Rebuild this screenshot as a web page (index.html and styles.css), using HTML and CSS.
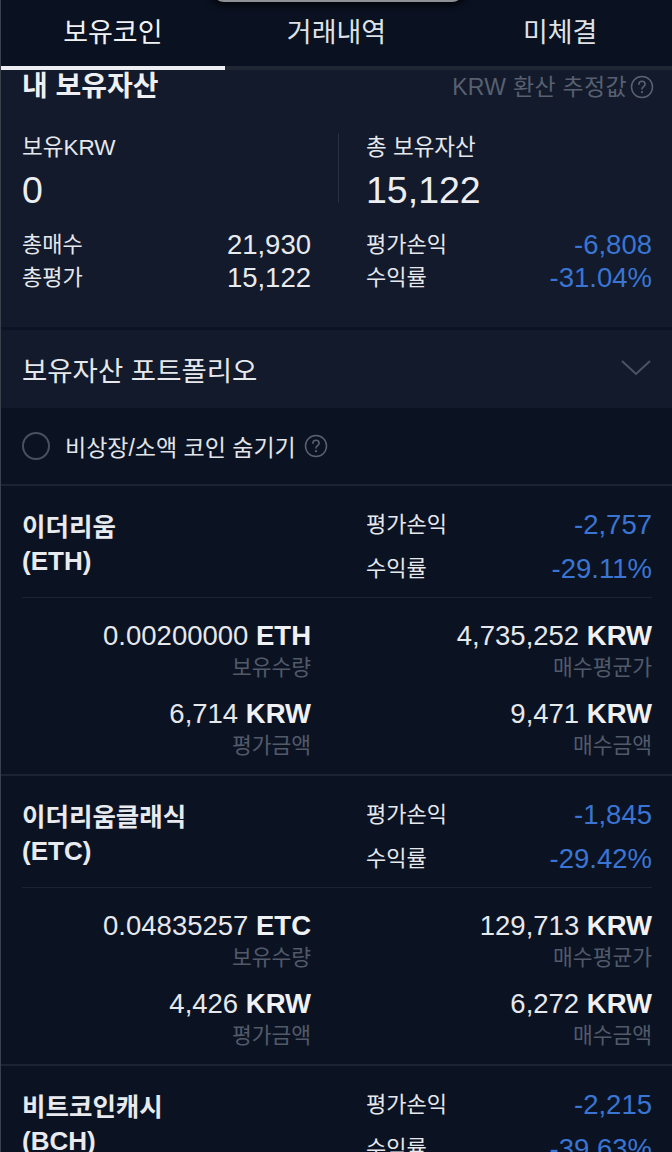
FILE: index.html
```html
<!DOCTYPE html>
<html lang="ko">
<head>
<meta charset="utf-8">
<title>보유코인</title>
<link rel="stylesheet" href="styles.css">
</head>
<body>
<div class="app">
  <div class="notch"></div>

  <nav class="tabs">
    <div class="tab active">보유코인</div>
    <div class="tab">거래내역</div>
    <div class="tab">미체결</div>
  </nav>

  <section class="summary">
    <div class="summary-head">
      <h2 class="summary-title">내 보유자산</h2>
      <div class="note">KRW 환산 추정값
        <svg class="help" viewBox="0 0 24 24" width="24" height="24"><circle cx="12" cy="12" r="10.5" fill="none" stroke="currentColor" stroke-width="1.5"/><path d="M8.9 9.3a3.1 3.1 0 0 1 6.2 0c0 2.2-3.1 2.3-3.1 4.7" fill="none" stroke="currentColor" stroke-width="1.6" stroke-linecap="round"/><circle cx="12" cy="17.2" r="1.1" fill="currentColor"/></svg>
      </div>
    </div>

    <div class="summary-top">
      <div class="total">
        <div class="total-label">보유KRW</div>
        <div class="total-value">0</div>
      </div>
      <div class="divider"></div>
      <div class="total">
        <div class="total-label">총 보유자산</div>
        <div class="total-value">15,122</div>
      </div>
    </div>

    <div class="summary-stats">
      <div class="stat-col">
        <div class="stat"><span class="label">총매수</span><span class="num">21,930</span></div>
        <div class="stat"><span class="label">총평가</span><span class="num">15,122</span></div>
      </div>
      <div class="stat-col">
        <div class="stat"><span class="label">평가손익</span><span class="num down">-6,808</span></div>
        <div class="stat"><span class="label">수익률</span><span class="num down">-31.04%</span></div>
      </div>
    </div>
  </section>

  <div class="portfolio-head">
    <span class="portfolio-title">보유자산 포트폴리오</span>
    <svg class="chevron" viewBox="0 0 30 16" width="30" height="16"><polyline points="1,1 15,14 29,1" fill="none" stroke="currentColor" stroke-width="2"/></svg>
  </div>

  <div class="filter-row">
    <span class="check"></span>
    <span class="filter-text">비상장/소액 코인 숨기기</span>
    <svg class="help" viewBox="0 0 24 24" width="24" height="24"><circle cx="12" cy="12" r="10.5" fill="none" stroke="currentColor" stroke-width="1.5"/><path d="M8.9 9.3a3.1 3.1 0 0 1 6.2 0c0 2.2-3.1 2.3-3.1 4.7" fill="none" stroke="currentColor" stroke-width="1.6" stroke-linecap="round"/><circle cx="12" cy="17.2" r="1.1" fill="currentColor"/></svg>
  </div>

  <ul class="coins">
    <li class="coin">
      <div class="coin-top">
        <div class="coin-name">
          <div class="name-ko">이더리움</div>
          <div class="name-sym">(ETH)</div>
        </div>
        <div class="coin-pnl">
          <div class="stat"><span class="label">평가손익</span><span class="num down">-2,757</span></div>
          <div class="stat"><span class="label">수익률</span><span class="num down">-29.11%</span></div>
        </div>
      </div>
      <div class="coin-detail">
        <div class="cell"><div class="val">0.00200000 <b>ETH</b></div><div class="sub">보유수량</div></div>
        <div class="cell"><div class="val">4,735,252 <b>KRW</b></div><div class="sub">매수평균가</div></div>
        <div class="cell"><div class="val">6,714 <b>KRW</b></div><div class="sub">평가금액</div></div>
        <div class="cell"><div class="val">9,471 <b>KRW</b></div><div class="sub">매수금액</div></div>
      </div>
    </li>

    <li class="coin">
      <div class="coin-top">
        <div class="coin-name">
          <div class="name-ko">이더리움클래식</div>
          <div class="name-sym">(ETC)</div>
        </div>
        <div class="coin-pnl">
          <div class="stat"><span class="label">평가손익</span><span class="num down">-1,845</span></div>
          <div class="stat"><span class="label">수익률</span><span class="num down">-29.42%</span></div>
        </div>
      </div>
      <div class="coin-detail">
        <div class="cell"><div class="val">0.04835257 <b>ETC</b></div><div class="sub">보유수량</div></div>
        <div class="cell"><div class="val">129,713 <b>KRW</b></div><div class="sub">매수평균가</div></div>
        <div class="cell"><div class="val">4,426 <b>KRW</b></div><div class="sub">평가금액</div></div>
        <div class="cell"><div class="val">6,272 <b>KRW</b></div><div class="sub">매수금액</div></div>
      </div>
    </li>

    <li class="coin">
      <div class="coin-top">
        <div class="coin-name">
          <div class="name-ko">비트코인캐시</div>
          <div class="name-sym">(BCH)</div>
        </div>
        <div class="coin-pnl">
          <div class="stat"><span class="label">평가손익</span><span class="num down">-2,215</span></div>
          <div class="stat"><span class="label">수익률</span><span class="num down">-39.63%</span></div>
        </div>
      </div>
    </li>
  </ul>
</div>
</body>
</html>
```

FILE: styles.css
```css
* { box-sizing: border-box; }

html, body {
  margin: 0;
  padding: 0;
  background: #0b1323;
}

body {
  width: 672px;
  height: 1152px;
  overflow: hidden;
  font-family: "Liberation Sans", "Noto Sans CJK KR", sans-serif;
  color: #e6e8ec;
}

.app {
  position: relative;
  min-height: 1152px;
  border-left: 1px solid #3a414c;
  background: #0b1323;
}

/* device frame edge peeking in at the top */
.notch {
  position: absolute;
  top: -20px;
  left: 211px;
  width: 252px;
  height: 22px;
  background: #05080f;
  border: 2px solid #8e9196;
  border-top: none;
  border-radius: 0 0 12px 12px;
  box-shadow: 0 0 6px 3px #03050a;
  z-index: 2;
}

/* tabs */
.tabs {
  display: grid;
  grid-template-columns: repeat(3, 1fr);
  background: #0a1120;
  border-bottom: 4px solid #1f2735;
}

.tab {
  position: relative;
  height: 66px;
  line-height: 66px;
  text-align: center;
  font-size: 27px;
  color: #dfe2e7;
}

.tab.active { color: #f1f2f4; }

.tab.active::after {
  content: "";
  position: absolute;
  left: 0;
  right: 0;
  bottom: -4px;
  height: 4px;
  background: #eceef1;
}

/* summary */
.summary {
  background: #121a2b;
  padding: 2px 20px 33px 21px;
}

.summary-head {
  display: flex;
  align-items: center;
  justify-content: space-between;
  height: 30px;
}

.summary-title {
  margin: 0;
  font-size: 28px;
  line-height: 30px;
  font-weight: 700;
  color: #eef0f3;
}

.note {
  display: flex;
  align-items: center;
  gap: 3px;
  margin-right: -2px;
  font-size: 23px;
  letter-spacing: 0.3px;
  line-height: 30px;
  color: #586070;
}

.help { color: #5a6271; flex: none; }

.summary-top {
  display: grid;
  grid-template-columns: 289px 1px 1fr;
  column-gap: 27px;
  margin-top: 31px;
}

.divider {
  height: 70px;
  background: #262f40;
}

.total-label {
  font-size: 22.5px;
  line-height: 30px;
}

.total-value {
  margin-top: 7px;
  font-size: 37.5px;
  line-height: 40px;
  color: #eceef1;
}

.summary-stats {
  display: grid;
  grid-template-columns: 289px 1fr;
  column-gap: 55px;
  margin-top: 18px;
}

.stat {
  display: flex;
  justify-content: space-between;
  align-items: center;
  height: 33px;
}

.label { font-size: 22px; line-height: 30px; }

.num { font-size: 27.5px; line-height: 32px; color: #e8eaee; }

.num.down { color: #3a75d3; }

/* portfolio */
.portfolio-head {
  display: flex;
  align-items: center;
  justify-content: space-between;
  height: 81px;
  padding: 0 21px 0 21px;
  background: #121a2b;
  border-top: 3px solid #0c1322;
}

.portfolio-title { font-size: 27.5px; color: #e6e8ec; }

.chevron { color: #4c5464; margin-top: -2px; }

/* filter */
.filter-row {
  display: flex;
  align-items: center;
  height: 78px;
  padding: 0 21px;
  background: #0b1323;
  border-bottom: 2px solid #1c2433;
}

.check {
  width: 28px;
  height: 28px;
  border-radius: 50%;
  border: 2px solid #495060;
  margin-right: 15px;
  flex: none;
}

.filter-text {
  font-size: 23px;
  margin-right: 8px;
  color: #e2e5e9;
}

/* coin list */
.coins {
  list-style: none;
  margin: 0;
  padding: 0;
}

.coin {
  padding: 0 20px 0 21px;
  border-bottom: 2px solid #1c2433;
}

.coin-top {
  display: grid;
  grid-template-columns: 289px 1fr;
  column-gap: 55px;
  padding: 17px 0 6px;
  border-bottom: 1px solid #1c2433;
}

.coin-name {
  margin-top: 7px;
  font-weight: 700;
  color: #e8eaee;
}

.name-ko { font-size: 25.5px; line-height: 34px; }

.name-sym { font-size: 26px; line-height: 34px; }

.coin-pnl .stat { height: 44px; }

.coin-detail {
  display: grid;
  grid-template-columns: 289px 1fr;
  column-gap: 55px;
  row-gap: 16px;
  padding: 22px 0 14px;
}

.cell { text-align: right; }

.val {
  font-size: 27.5px;
  line-height: 32px;
  color: #e6e8ec;
}

.val b { font-weight: 700; color: #f0f1f4; }

.sub {
  padding-top: 2px;
  font-size: 21.5px;
  line-height: 28px;
  color: #525a69;
}
```
